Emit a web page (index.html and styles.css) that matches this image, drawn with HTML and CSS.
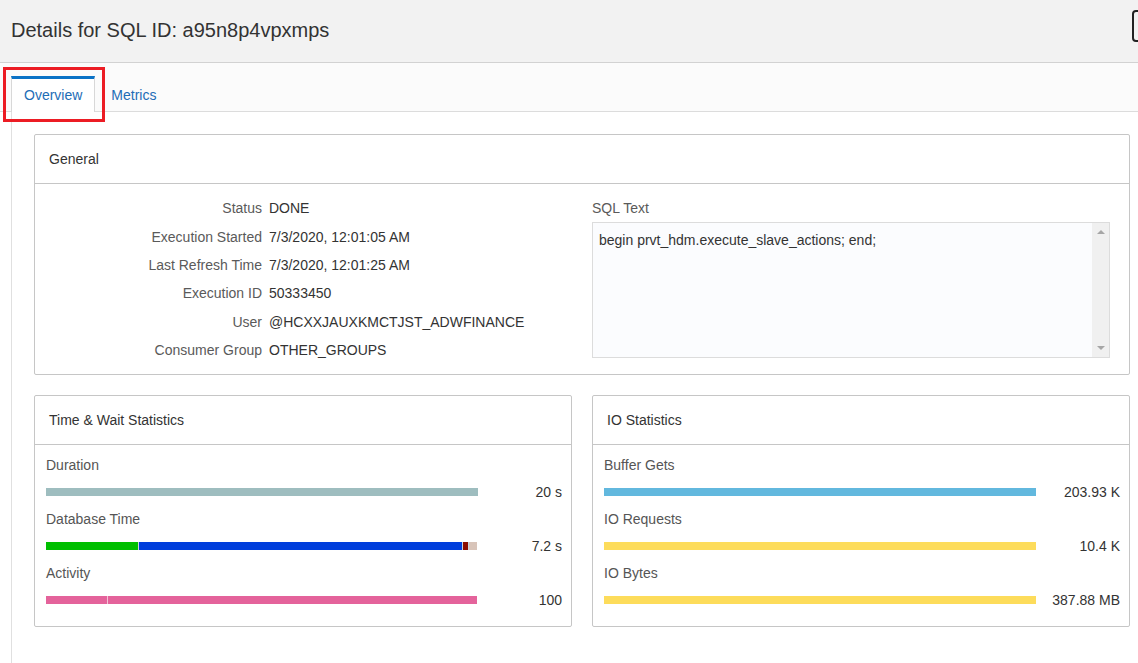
FILE: index.html
```
<!DOCTYPE html>
<html lang="en">
<head>
<meta charset="utf-8">
<title>Details for SQL ID</title>
<link rel="stylesheet" href="styles.css">
</head>
<body>
<div class="page">
  <header class="header">
    <h1 class="title">Details for SQL ID: a95n8p4vpxmps</h1>
    <div class="hdr-btn"></div>
  </header>
  <nav class="tabbar">
    <div class="tab active">Overview</div>
    <div class="tab">Metrics</div>
    <div class="annot"></div>
  </nav>
  <main class="content">
    <section class="card">
      <div class="card-hd">General</div>
      <div class="general">
        <div class="props">
          <div class="lbl">Status</div><div class="val">DONE</div>
          <div class="lbl">Execution Started</div><div class="val">7/3/2020, 12:01:05 AM</div>
          <div class="lbl">Last Refresh Time</div><div class="val">7/3/2020, 12:01:25 AM</div>
          <div class="lbl">Execution ID</div><div class="val">50333450</div>
          <div class="lbl">User</div><div class="val">@HCXXJAUXKMCTJST_ADWFINANCE</div>
          <div class="lbl">Consumer Group</div><div class="val">OTHER_GROUPS</div>
        </div>
        <div class="sqlcol">
          <div class="sql-lbl">SQL Text</div>
          <div class="sqlbox">
            <div class="sqltext">begin prvt_hdm.execute_slave_actions; end;</div>
            <div class="scroll">
              <span class="arr up"></span>
              <span class="arr down"></span>
            </div>
          </div>
        </div>
      </div>
    </section>
    <div class="stats">
      <section class="card">
        <div class="card-hd">Time &amp; Wait Statistics</div>
        <div class="stat-body">
          <div class="item">
            <div class="item-lbl">Duration</div>
            <div class="item-row">
              <div class="bar"><span class="seg c-dur" style="width:100%"></span></div>
              <div class="item-val">20 s</div>
            </div>
          </div>
          <div class="item">
            <div class="item-lbl">Database Time</div>
            <div class="item-row">
              <div class="bar">
                <span class="seg c-green" style="width:92px"></span>
                <span class="seg c-blue sep" style="width:324px"></span>
                <span class="seg c-red sep" style="width:6px"></span>
                <span class="seg c-tan sep" style="width:9px"></span>
              </div>
              <div class="item-val">7.2 s</div>
            </div>
          </div>
          <div class="item">
            <div class="item-lbl">Activity</div>
            <div class="item-row">
              <div class="bar">
                <span class="seg c-pink" style="width:61px"></span>
                <span class="seg c-pink sep-pink" style="width:370px"></span>
              </div>
              <div class="item-val">100</div>
            </div>
          </div>
        </div>
      </section>
      <section class="card">
        <div class="card-hd">IO Statistics</div>
        <div class="stat-body">
          <div class="item">
            <div class="item-lbl">Buffer Gets</div>
            <div class="item-row">
              <div class="bar"><span class="seg c-sky" style="width:100%"></span></div>
              <div class="item-val">203.93 K</div>
            </div>
          </div>
          <div class="item">
            <div class="item-lbl">IO Requests</div>
            <div class="item-row">
              <div class="bar"><span class="seg c-yellow" style="width:100%"></span></div>
              <div class="item-val">10.4 K</div>
            </div>
          </div>
          <div class="item">
            <div class="item-lbl">IO Bytes</div>
            <div class="item-row">
              <div class="bar"><span class="seg c-yellow" style="width:100%"></span></div>
              <div class="item-val">387.88 MB</div>
            </div>
          </div>
        </div>
      </section>
    </div>
  </main>
</div>
</body>
</html>
```

FILE: styles.css
```
* { box-sizing: border-box; }
html, body { margin: 0; padding: 0; height: 100%; }
body {
  font-family: "Liberation Sans", Arial, sans-serif;
  font-size: 14px;
  color: #333;
  background: #fff;
  overflow: hidden;
}
.page {
  display: flex;
  flex-direction: column;
  min-height: 100%;
}
.header {
  height: 63px;
  background: #f2f2f2;
  border-bottom: 1px solid #d2d2d2;
  display: flex;
  align-items: flex-start;
  padding-left: 11px;
  overflow: hidden;
}
.title {
  margin: 0;
  flex: 1;
  font-size: 20px;
  font-weight: normal;
  line-height: 60px;
  color: #333;
}
.hdr-btn {
  flex-shrink: 0;
  width: 40px;
  height: 32px;
  margin-top: 10px;
  margin-right: -34px;
  border: 2px solid #222;
  border-radius: 4px;
}
.tabbar {
  position: relative;
  height: 49px;
  background: #fbfbfb;
  border-bottom: 1px solid #dcdcdc;
  display: flex;
  align-items: flex-end;
  padding-left: 11px;
  gap: 3px;
}
.tab {
  height: 36px;
  margin-bottom: -1px;
  padding: 0 12px;
  border-top: 3px solid transparent;
  border-left: 1px solid transparent;
  border-right: 1px solid transparent;
  line-height: 33px;
  color: #1d6db6;
  font-size: 14px;
}
.tab.active {
  background: #fff;
  border-top-color: #0a72c6;
  border-left-color: #d8d8d8;
  border-right-color: #d8d8d8;
}
.annot {
  position: absolute;
  left: 3px;
  top: 4px;
  width: 102px;
  height: 55px;
  border: 3px solid #ec1c24;
  pointer-events: none;
}
.content {
  flex: 1;
  margin-left: 11px;
  border-left: 1px solid #e0e0e0;
  padding: 22px 8px 0 22px;
}
.card {
  border: 1px solid #c6c6c6;
  border-radius: 2px;
  background: #fff;
}
.card-hd {
  height: 49px;
  line-height: 48px;
  padding: 0 14px;
  border-bottom: 1px solid #c6c6c6;
  color: #333;
}
.general {
  display: flex;
  padding: 10px 19px 10px 0;
}
.props {
  width: 557px;
  display: grid;
  grid-template-columns: 227px auto;
  column-gap: 7px;
  grid-auto-rows: 28.4px;
  align-items: center;
}
.lbl { text-align: right; color: #5a5a5a; }
.val { color: #333; }
.sqlcol { flex: 1; }
.sql-lbl {
  height: 28.4px;
  line-height: 28.4px;
  color: #5a5a5a;
}
.sqlbox {
  height: 136px;
  border: 1px solid #dcdcdc;
  background: #fbfcfe;
  display: flex;
}
.sqltext {
  flex: 1;
  padding: 9px 6px;
  line-height: 17px;
  color: #333;
}
.scroll {
  width: 17px;
  background: #f0f0f0;
  position: relative;
}
.arr {
  position: absolute;
  left: 5px;
  width: 0;
  height: 0;
  border-left: 4px solid transparent;
  border-right: 4px solid transparent;
}
.arr.up { top: 7px; border-bottom: 4px solid #a6a6a6; }
.arr.down { bottom: 7px; border-top: 4px solid #a6a6a6; }
.stats {
  margin-top: 20px;
  display: grid;
  grid-template-columns: 1fr 1fr;
  column-gap: 20px;
}
.stat-body {
  padding: 10px 9px 9px 11px;
}
.item-lbl {
  height: 20px;
  line-height: 20px;
  color: #555;
}
.item-row {
  height: 34px;
  display: flex;
  align-items: center;
}
.bar {
  flex: 1;
  height: 8px;
  display: flex;
  overflow: hidden;
}
.seg { display: block; height: 8px; flex-shrink: 0; }
.sep { border-left: 1px solid #c9d3dc; }
.sep-pink { border-left: 1px solid #f4c3d7; }
.item-val {
  width: 84px;
  text-align: right;
  color: #333;
}
.c-dur { background: #9ebdbf; }
.c-green { background: #00bf00; }
.c-blue { background: #003edc; }
.c-red { background: #8a0c00; }
.c-tan { background: #d8c4b9; }
.c-pink { background: #e4639b; }
.c-sky { background: #62b8de; }
.c-yellow { background: #fddc5b; }
```
